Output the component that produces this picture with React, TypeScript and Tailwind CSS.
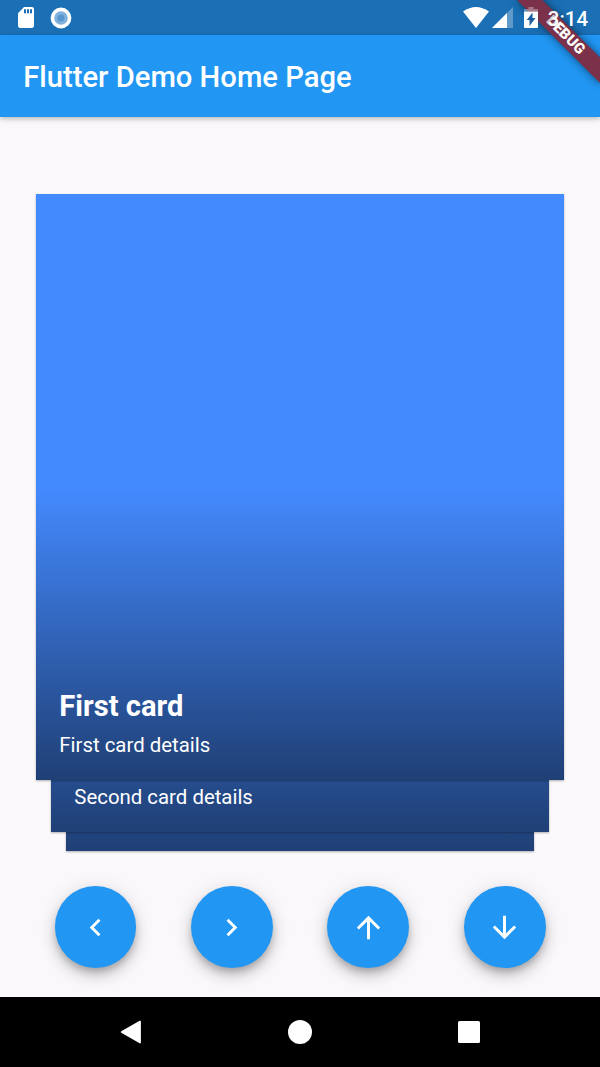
type CardData = { id: number; title?: string; details?: string; className: string };

const cards: CardData[] = [
  { id: 3, className: "mx-[66px] mt-[71px]" },
  { id: 2, details: "Second card details", className: "mx-[51px] mt-[52px]" },
  { id: 1, title: "First card", details: "First card details", className: "mx-9" },
];

const arrows = [
  { label: "Left", d: "M15.41 7.41 14 6l-6 6 6 6 1.41-1.41L10.83 12z" },
  { label: "Right", d: "M10 6 8.59 7.41 13.17 12l-4.58 4.59L10 18l6-6z" },
  { label: "Up", d: "M4 12l1.41 1.41L11 7.83V20h2V7.83l5.58 5.59L20 12l-8-8-8 8z" },
  { label: "Down", d: "M20 12l-1.41-1.41L13 16.17V4h-2v12.17l-5.58-5.59L4 12l8 8 8-8z" },
];

function DebugBanner() {
  return (
    <div className="absolute top-0 right-0 h-[110px] w-[110px] overflow-hidden">
      <div className="absolute top-[40.8px] left-[51.7px] flex h-[17.5px] w-[116.6px] origin-[58.3px_-40.8px] rotate-45 items-center justify-center bg-[#7b3149] text-[14.9px] leading-none font-black text-white shadow-[0_0_9px_rgba(0,0,0,0.55)]">
        <span>
          <span className="text-[#cdc3c9]">D</span>EBUG
        </span>
      </div>
    </div>
  );
}

/* System icons that lie over the app bar and the debug ribbon. */
function StatusBar() {
  return (
    <div className="absolute inset-x-0 top-0 flex h-[35px] items-center pr-3 pl-[14px] text-white">
      <svg className="h-[25px] w-6" viewBox="0 0 24 24" preserveAspectRatio="none" fill="currentColor">
        <path d="M18 2h-8L4.02 8 4 20c0 1.1.9 2 2 2h12c1.1 0 2-.9 2-2V4c0-1.1-.9-2-2-2zm-6 6h-2V4h2v4zm3 0h-2V4h2v4zm3 0h-2V4h2v4z" />
      </svg>
      <svg className="ml-[12px] h-[22px] w-[22px]" viewBox="0 0 22 22">
        <circle cx="11" cy="11" r="10.4" fill="#fff" />
        <circle cx="11" cy="11" r="6.8" fill="#80b1dc" />
        <circle cx="11" cy="11" r="3.5" fill="#5897cd" />
      </svg>
      <div className="ml-auto flex items-center">
        <svg className="h-[21px] w-[26px]" viewBox="0 0 26 21" fill="currentColor">
          <path d="M0 4.6Q13-4.400 26 4.600L13 21z" />
        </svg>
        <svg className="ml-[3px] h-[21px] w-[21px]" viewBox="0 0 21 21" fill="currentColor">
          <path d="M21 0v21H0z" opacity=".3" />
          <path d="M15 6v15H0z" />
        </svg>
        <svg className="ml-[11px] h-[21px] w-[14px]" viewBox="0 0 14 21">
          <path d="M4.500 0h5v2H14v2.500H0V2h4.500z" fill="#fff" opacity=".35" />
          <path d="M0 4.500h14V20q0 1-1 1H1q-1 0-1-1z" fill="#fff" />
          <path d="M8.500 5.500v5.500H11.500L5.500 19v-6H2.800z" fill="#1a5f9f" />
        </svg>
        <span className="mt-[3px] ml-[9.5px] text-[20.4px] leading-none font-medium">3:14</span>
      </div>
    </div>
  );
}

export default function App() {
  return (
    <div className="relative flex h-[1067px] w-[600px] flex-col overflow-hidden bg-[#faf8fb] font-[Roboto,sans-serif]">
      <div className="h-[35px] shrink-0 bg-[#1a6fb5]" />
      <header className="flex h-[82px] shrink-0 items-center bg-[#2196f3] px-[23.3px] pt-[3px] text-[29.2px] font-medium text-white shadow-[0_2px_5px_rgba(0,0,0,0.25)]">
        <h1>Flutter Demo Home Page</h1>
      </header>

      <main className="flex flex-1 flex-col pt-[77px]">
        <section className="grid">
          {cards.map((card) => (
            <article
              key={card.id}
              className={`col-start-1 row-start-1 flex h-[586px] flex-col justify-end bg-[#448aff] bg-linear-to-b from-transparent from-50% to-black/54 px-[23.3px] pb-[23px] text-white shadow-[0_1px_2px_rgba(0,0,0,0.3)] ${card.className}`}
            >
              {card.title && <h2 className="text-[29.17px] leading-[34px] font-bold">{card.title}</h2>}
              {card.details && <p className="mt-[10px] text-[20.4px] leading-6">{card.details}</p>}
            </article>
          ))}
        </section>
        <div className="mt-[35px] flex justify-between px-[54.5px]">
          {arrows.map((arrow) => (
            <button
              key={arrow.label}
              aria-label={arrow.label}
              className="flex h-[82px] w-[81.7px] items-center justify-center rounded-full bg-[#2196f3] text-white shadow-[0_5px_7px_-1px_rgba(0,0,0,0.2),0_9px_15px_rgba(0,0,0,0.14),0_2px_20px_rgba(0,0,0,0.1)]"
            >
              <svg className="h-[35px] w-[35px]" viewBox="0 0 24 24" fill="currentColor">
                <path d={arrow.d} />
              </svg>
            </button>
          ))}
        </div>
      </main>

      <nav className="flex h-[70px] shrink-0 items-center justify-between bg-black pr-[120px] pl-[120px]">
        <svg className="h-6 w-[22px]" viewBox="0 0 23 24" fill="#fff">
          <path d="M1.3 11.2 20.5.3q1.3-.5 1.3.8v21.8q0 1.3-1.3.8L1.3 12.8q-1.2-.8 0-1.6z" />
        </svg>
        <div className="h-6 w-6 rounded-full bg-white" />
        <div className="h-[22px] w-[22px] rounded-[1.5px] bg-white" />
      </nav>
      <DebugBanner />
      <StatusBar />
    </div>
  );
}
